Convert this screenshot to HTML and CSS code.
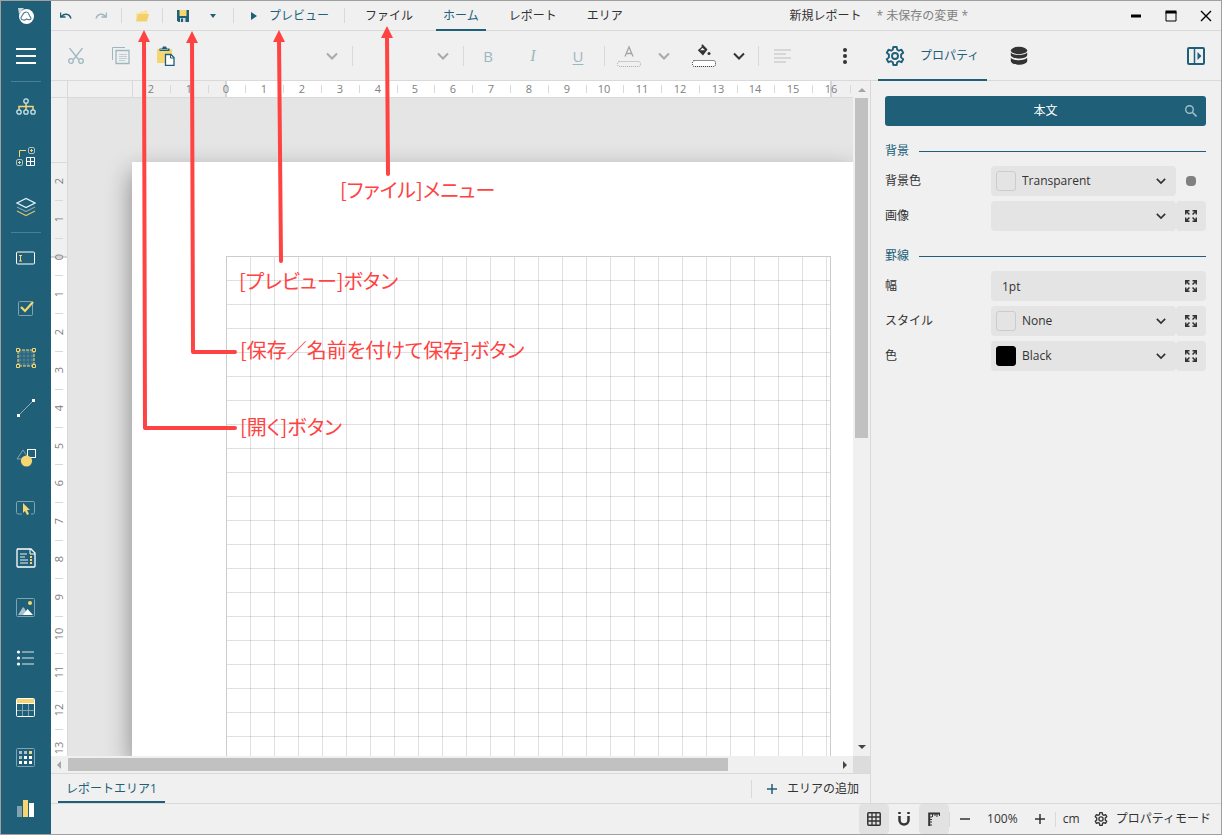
FILE: index.html
```html
<!DOCTYPE html>
<html lang="ja">
<head>
<meta charset="utf-8">
<meta name="viewport" content="width=device-width, initial-scale=1">
<title>新規レポート</title>
<link rel="stylesheet" href="styles.css">
</head>
<body>
<svg class="symbols" aria-hidden="true">
  <symbol id="chevron" viewBox="0 0 12 12"><path d="M1 3.5l5 5 5-5" fill="none" stroke="currentColor" stroke-width="2"/></symbol>
  <symbol id="expand" viewBox="0 0 12 12"><path d="M0 0h4.5v1.5H2.6L5 3.9 3.9 5 1.5 2.6v1.9H0zM12 0v4.5h-1.5V2.6L8.1 5 7 3.9l2.4-2.4H7.5V0zM0 12V7.5h1.5v1.9L3.9 7 5 8.1l-2.4 2.4h1.9V12zM12 12H7.500v-1.500h1.900L7 8.100 8.100 7l2.400 2.400V7.500H12z" fill="currentColor"/></symbol>
  <symbol id="gear" viewBox="0 0 20 20"><path d="M8.300 1h3.400l.5 2.700 1.700 1 2.600-1 1.700 3-2.100 1.800v2.900l2.100 1.800-1.700 3-2.600-1-1.700 1-.5 2.800H8.300l-.5-2.800-1.700-1-2.600 1-1.700-3 2.100-1.800V8.500L1.800 6.700l1.700-3 2.600 1 1.700-1z" fill="none" stroke="currentColor" stroke-width="1.900" stroke-linejoin="round"/><circle cx="10" cy="10" r="3" fill="none" stroke="currentColor" stroke-width="1.900"/></symbol>
</svg>
<div class="app">
  <nav class="sidebar" aria-label="レポートコントロール">
    <div class="logo">
      <svg width="18" height="18" viewBox="0 0 18 18"><path d="M1 1h6L2 7z" fill="#c9dade"/><circle cx="9.500" cy="9.500" r="7.500" fill="#fff"/><path d="M4 11c0-1.500 1-1.800 1.500-3C6.500 5.500 8 5 9.500 5c2 0 2.300 2 3.200 4 .8 1.500 1.300 1.500 1.300 2.500 0 1.500-3 1.500-4.500.5-1.500 1.500-5.500 1.500-5.500-1z" fill="none" stroke="#547f92" stroke-width="1.200"/></svg>
    </div>
    <button class="tool" aria-label="メニュー"><svg width="20" height="18" viewBox="0 0 20 18"><path d="M0 2h20M0 9h20M0 16h20" stroke="#fff" stroke-width="2"/></svg></button>
    <hr class="tool-line">
    <button class="tool" aria-label="エクスプローラ"><svg width="20" height="18" viewBox="0 0 20 18" fill="none"><path d="M10 5v7M3 12V8.500h14V12" stroke="#f5d671" stroke-width="1.500"/><g stroke="#c5e4ee" stroke-width="1.300" fill="#205f78"><circle cx="10" cy="3" r="2.200"/><circle cx="3" cy="14" r="2.200"/><circle cx="10" cy="14" r="2.200"/><circle cx="17" cy="14" r="2.200"/></g></svg></button>
    <button class="tool" aria-label="グループエディタ"><svg width="20" height="20" viewBox="0 0 20 20" fill="none"><path d="M3.500 10V3.500H10" stroke="#f5d671"/><g stroke="#a7c0ca"><rect x="12.500" y=".5" width="6" height="6" rx="1.500"/><rect x=".5" y="12.500" width="6" height="6" rx="1.500"/></g><path d="M14 3.500h3M15.500 2v3M2 15.500h3M3.500 14v3" stroke="#f5d671"/><path d="M10.500 10.500h8v8h-8zM14.500 10v9M10 14.500h9" stroke="#fff"/></svg></button>
    <button class="tool" aria-label="レイヤーリスト"><svg width="20" height="20" viewBox="0 0 20 20" fill="none"><path d="M1 6l9-4.500L19 6l-9 4.500z" stroke="#e5f2f6" stroke-width="1.200"/><path d="M1 10l9 4.500 9-4.500" stroke="#7fa3b1" stroke-width="1.200"/><path d="M1 14l9 4.500 9-4.500" stroke="#d8c36e" stroke-width="1.200"/></svg></button>
    <hr class="tool-line">
    <button class="tool" aria-label="テキストボックス"><svg width="20" height="14" viewBox="0 0 20 14" fill="none"><rect x=".5" y="1" width="18" height="12" rx="1" stroke="#fff"/><path d="M3 4.500h3M4.500 4v6M3 10h3" stroke="#f5d671"/></svg></button>
    <button class="tool" aria-label="チェックボックス"><svg width="18" height="16" viewBox="0 0 18 16" fill="none"><rect x="1.500" y="1.500" width="14" height="14" rx="1" stroke="#7fa3b1"/><path d="M4 7l4 4 8-9" stroke="#f5d671" stroke-width="2.200"/></svg></button>
    <button class="tool" aria-label="コンテナ"><svg width="20" height="20" viewBox="0 0 20 20" fill="none"><path d="M2 2h16v16H2z" fill="#4a7c90"/><path d="M6 2v16M10 2v16M14 2v16M2 6h16M2 10h16M2 14h16" stroke="#205f78"/><path d="M2 2h16v16H2z" stroke="#f5d671" stroke-dasharray="3 1"/><g fill="#205f78" stroke="#f5d671"><path d="M.5.500h3v3h-3zM16.500.500h3v3h-3zM.5 16.500h3v3h-3zM16.500 16.500h3v3h-3z"/></g></svg></button>
    <button class="tool" aria-label="直線"><svg width="20" height="20" viewBox="0 0 20 20"><path d="M2 18L18 2" stroke="#8fb0bd"/><path d="M1 16h3v3H1zM16 1h3v3h-3z" fill="#fff"/></svg></button>
    <button class="tool" aria-label="図形"><svg width="20" height="20" viewBox="0 0 20 20" fill="none"><path d="M1 11L7 2l6 9z" stroke="#7fa3b1"/><rect x="11.500" y="1.500" width="8" height="8" stroke="#fff"/><circle cx="10.500" cy="13" r="5.600" fill="#f5d671"/></svg></button>
    <button class="tool" aria-label="入力フィールド"><svg width="20" height="16" viewBox="0 0 20 16" fill="none"><path d="M6 14H2q-1.500 0-1.500-1.500v-10Q.5 1.500 2 1.500h15q1.500 0 1.500 1v10q0 1.500-1.500 1.500h-2" stroke="#7fa3b1"/><path d="M7 3l7 7h-3l2 4-2 1-2-4-2 2z" fill="#f5d671"/></svg></button>
    <button class="tool" aria-label="リッチテキスト"><svg width="20" height="20" viewBox="0 0 20 20" fill="none"><path d="M1.500 1H15l4 4v13q0 1-1 1H2q-1 0-1-1V2z" stroke="#fff" stroke-width="1.300"/><path d="M14 1v5h5" stroke="#fff"/><path d="M4 6h7M4 9h5M4 12h8M4 15h8" stroke="#a7c0ca" stroke-width="1.600"/><path d="M14 8h2v2h-2zM14 11h2v2h-2zM14 14h2v2h-2z" fill="#f5d671"/></svg></button>
    <button class="tool" aria-label="画像"><svg width="20" height="20" viewBox="0 0 20 20" fill="none"><rect x=".5" y=".5" width="18" height="18" rx="1" stroke="#7fa3b1"/><path d="M2 17l5-8 2 2 2 6z" fill="#a7c0ca"/><path d="M7 17l4.500-6 5.500 6z" fill="#fff"/><circle cx="14" cy="5" r="2" fill="#f5d671"/></svg></button>
    <button class="tool" aria-label="リスト"><svg width="20" height="18" viewBox="0 0 20 18"><path d="M6 3h12M6 9h12M6 15h12" stroke="#7fa3b1" stroke-width="2"/><g fill="#fff"><circle cx="2.500" cy="3" r="1.600"/><circle cx="2.500" cy="9" r="1.600"/><circle cx="2.500" cy="15" r="1.600"/></g></svg></button>
    <button class="tool" aria-label="テーブル"><svg width="20" height="20" viewBox="0 0 20 20" fill="none"><path d="M6.500 6v12M12.500 6v12M1 12.500h17" stroke="#7fa3b1"/><path d="M1 1h17v4H1z" fill="#f5d671"/><path d="M.5 5.500h18" stroke="#fff"/><rect x=".5" y=".5" width="18" height="18" rx="1" stroke="#fff"/></svg></button>
    <button class="tool" aria-label="Tablix"><svg width="20" height="20" viewBox="0 0 20 20" fill="none"><rect x=".5" y=".5" width="18" height="18" rx="1" stroke="#7fa3b1"/><path d="M3 3h3v3H3zM8 3h3v3H8zM3 8h3v3H3z" fill="#a7c0ca"/><path d="M13 3h3v3h-3z" fill="#f5d671"/><path d="M8 8h3v3H8zM13 8h3v3h-3zM3 13h3v3H3zM8 13h3v3H8zM13 13h3v3h-3z" fill="#fff"/></svg></button>
    <button class="tool" aria-label="チャート"><svg width="18" height="18" viewBox="0 0 18 18"><path d="M0 7h5v11H0z" fill="#7fa3b1"/><path d="M6 1h5v17H6z" fill="#f5d671"/><path d="M12 4h5v14h-5z" fill="#fff"/></svg></button>
  </nav>

  <div class="main">
    <header class="titlebar">
      <button class="icon-btn teal" aria-label="元に戻す"><svg width="12" height="8" viewBox="0 0 12 8" fill="none"><path d="M.5.500v4.500h5M1.500 4.500C4 1.500 9 1 11 6.500" stroke="currentColor" stroke-width="1.500"/></svg></button>
      <button class="icon-btn faded next" aria-label="やり直し"><svg width="12" height="8" viewBox="0 0 12 8" fill="none"><path d="M11.500.500v4.500h-5M10.500 4.500C8 1.500 3 1 1 6.500" stroke="currentColor" stroke-width="1.500"/></svg></button>
      <span class="sep"></span>
      <button class="icon-btn" aria-label="開く"><svg width="14" height="12" viewBox="0 0 14 12"><path d="M1 10V3h3.500l1-1.500h3L9 .5h3.500V4H3z" fill="#fae39b"/><path d="M3 4h11l-2 7.500H1z" fill="#f4d06a"/></svg></button>
      <span class="sep"></span>
      <button class="icon-btn" aria-label="保存"><svg width="12" height="12" viewBox="0 0 12 12"><path d="M0 0h12v12H1.500L0 10.500z" fill="#205f78"/><path d="M2.500 0h7v6h-7z" fill="#f5d671"/><path d="M3 8h5.500v4H3z" fill="#cfdde2"/><path d="M4 8.500h2V12H4z" fill="#205f78"/></svg></button>
      <button class="icon-btn teal" aria-label="名前を付けて保存"><svg width="6" height="4" viewBox="0 0 6 4"><path d="M0 0h6L3 4z" fill="currentColor"/></svg></button>
      <span class="sep"></span>
      <button class="preview"><svg width="8" height="8" viewBox="0 0 8 8"><path d="M1 0l6 4-6 4z" fill="currentColor"/></svg>プレビュー</button>
      <span class="sep"></span>
      <nav class="menu">
        <button class="menu-tab">ファイル</button>
        <button class="menu-tab active">ホーム</button>
        <button class="menu-tab">レポート</button>
        <button class="menu-tab">エリア</button>
      </nav>
      <div class="doc-title"><span>新規レポート</span><span class="unsaved">* 未保存の変更 *</span></div>
      <div class="window-buttons">
        <button class="icon-btn black" aria-label="最小化"><svg width="12" height="12" viewBox="0 0 12 12"><path d="M1 6h10" stroke="currentColor" stroke-width="3"/></svg></button>
        <button class="icon-btn black" aria-label="最大化"><svg width="12" height="12" viewBox="0 0 12 12"><path d="M1 2h10v9H1z" fill="none" stroke="currentColor"/><path d="M.5 2h11" stroke="currentColor" stroke-width="3"/></svg></button>
        <button class="icon-btn black" aria-label="閉じる"><svg width="12" height="12" viewBox="0 0 12 12"><path d="M1 1l10 10M11 1L1 11" stroke="currentColor" stroke-width="1.400"/></svg></button>
      </div>
    </header>

    <div class="content">
      <main class="editor">
        <div class="toolbar">
          <button class="clip-btn faded" aria-label="切り取り"><svg width="16" height="16" viewBox="0 0 16 16" fill="none" stroke="currentColor" stroke-width="1.300"><path d="M1.500 0l9 11.500M14.500 0l-9 11.500"/><circle cx="3" cy="13" r="2.300"/><circle cx="13" cy="13" r="2.300"/></svg></button>
          <button class="clip-btn faded" aria-label="コピー"><svg width="18" height="18" viewBox="0 0 18 18" fill="none" stroke="currentColor"><path d="M.5 13V.5H13"/><path d="M4 3.500h13v13H4z" stroke-width="1.300"/><path d="M7 7.500h8M7 9.500h8M7 11.500h8M7 13.500h6" stroke="#bccdd5"/></svg></button>
          <button class="clip-btn" aria-label="貼り付け"><svg width="18" height="20" viewBox="0 0 18 20"><path d="M0 3h15v14H0z" fill="#f5d671"/><path d="M2.500 5V2.500H5L6 .5h3L10 2.500h2.500V5z" fill="#205f78"/><path d="M3.500 3.500h8" stroke="#f0f0f0" stroke-dasharray="1 1"/><path d="M8.500 8.500h5.500l3 3v8H8.500z" fill="#fff" stroke="#205f78" stroke-width="1.300"/><path d="M13.500 8.500v3.500H17" fill="none" stroke="#205f78"/></svg></button>
          <label class="combo font-combo"><select aria-label="フォント"><option></option></select><svg class="combo-arrow" width="12" height="12"><use href="#chevron"/></svg></label>
          <span class="sep tall"></span>
          <label class="combo size-combo"><select aria-label="フォントサイズ"><option></option></select><svg class="combo-arrow" width="12" height="12"><use href="#chevron"/></svg></label>
          <span class="sep tall"></span>
          <div class="styles">
            <button class="style-btn">B</button>
            <button class="style-btn italic">I</button>
            <button class="style-btn underline">U</button>
          </div>
          <span class="sep tall"></span>
          <button class="style-btn" aria-label="文字色"><svg width="24" height="24" viewBox="0 0 24 24" fill="none" stroke="#a5a5a5"><path d="M8 12.500L12 3l4 9.500M9.500 9.500h5" stroke-width="1.300"/><rect x=".5" y="17.500" width="23" height="5" rx="2" stroke-dasharray="1 1"/></svg></button>
          <button class="icon-btn grey" aria-label="文字色の選択"><svg width="12" height="12"><use href="#chevron"/></svg></button>
          <button class="style-btn next" aria-label="背景色"><svg width="24" height="24" viewBox="0 0 24 24"><path d="M9.500 1l1-.8 5 5.300L11 11.500 5.800 6.300l4-3.500z" fill="#333"/><path d="M8 6.200l2.500-2.500 2.500 2.500z" fill="#f0f0f0"/><circle cx="17" cy="9.500" r="1.500" fill="#333"/><rect x=".5" y="16.500" width="23" height="6" rx="2" fill="#fff" stroke="#222" stroke-dasharray="1 1"/></svg></button>
          <button class="icon-btn dark" aria-label="背景色の選択"><svg width="12" height="12"><use href="#chevron"/></svg></button>
          <span class="sep tall"></span>
          <button class="style-btn" aria-label="配置"><svg width="18" height="14" viewBox="0 0 18 14"><path d="M0 1h17M0 5h12M0 9h17M0 13h12" stroke="#bdbdbd"/></svg></button>
          <button class="icon-btn dark more" aria-label="その他"><svg width="6" height="18" viewBox="0 0 6 18" fill="currentColor"><circle cx="3" cy="3" r="2"/><circle cx="3" cy="9" r="2"/><circle cx="3" cy="15" r="2"/></svg></button>
        </div>

        <div class="design">
          <div class="corner"></div>
          <div class="ruler-x">
            <svg width="785" height="16" aria-hidden="true">
              <path d="M158 0h605v16H158z" fill="#fff"/>
              <path d="M64.500 0v16" stroke="#d9d9d9"/>
              <path d="M158 0v16M763 0v16" stroke="#d5d5d5" stroke-width="2"/>
              <path class="ticks" d="M102.500 4v8M140.500 4v8M177.500 4v8M215.500 4v8M253.500 4v8M291.500 4v8M329.500 4v8M366.500 4v8M404.500 4v8M442.500 4v8M480.500 4v8M518.500 4v8M555.500 4v8M593.500 4v8M631.500 4v8M669.500 4v8M706.500 4v8M744.500 4v8M782.500 4v8"/>
              <g class="marks"><text x="83" y="12">2</text><text x="121" y="12">1</text><text x="158" y="12">0</text><text x="196" y="12">1</text><text x="234" y="12">2</text><text x="272" y="12">3</text><text x="310" y="12">4</text><text x="347" y="12">5</text><text x="385" y="12">6</text><text x="423" y="12">7</text><text x="461" y="12">8</text><text x="499" y="12">9</text><text x="536" y="12">10</text><text x="574" y="12">11</text><text x="612" y="12">12</text><text x="650" y="12">13</text><text x="687" y="12">14</text><text x="725" y="12">15</text><text x="763" y="12">16</text></g>
            </svg>
          </div>
          <div class="ruler-y">
            <svg width="16" height="658" aria-hidden="true">
              <path d="M0 159h16v2000H0z" fill="#fff"/>
              <path d="M0 64.500h16" stroke="#d9d9d9"/>
              <path d="M0 159h16" stroke="#d5d5d5" stroke-width="2"/>
              <path class="ticks" d="M4 102.500h8M4 140.500h8M4 177.500h8M4 215.500h8M4 253.500h8M4 291.500h8M4 329.500h8M4 366.500h8M4 404.500h8M4 442.500h8M4 480.500h8M4 518.500h8M4 555.500h8M4 593.500h8M4 631.500h8"/>
              <g class="marks" transform="rotate(-90)"><text x="-83" y="12">2</text><text x="-121" y="12">1</text><text x="-159" y="12">0</text><text x="-196" y="12">1</text><text x="-234" y="12">2</text><text x="-272" y="12">3</text><text x="-310" y="12">4</text><text x="-348" y="12">5</text><text x="-385" y="12">6</text><text x="-423" y="12">7</text><text x="-461" y="12">8</text><text x="-499" y="12">9</text><text x="-536" y="12">10</text><text x="-574" y="12">11</text><text x="-612" y="12">12</text><text x="-650" y="12">13</text></g>
            </svg>
          </div>
          <div class="viewport"><div class="page"><div class="page-grid"></div></div></div>
          <div class="scroll-y">
            <svg class="muted" width="8" height="4" viewBox="0 0 8 4"><path d="M0 4l4-4 4 4z" fill="currentColor"/></svg>
            <div class="track-y"><div class="thumb-y"></div></div>
            <svg width="8" height="4" viewBox="0 0 8 4"><path d="M0 0h8L4 4z" fill="currentColor"/></svg>
          </div>
          <div class="scroll-x">
            <svg class="muted" width="4" height="8" viewBox="0 0 4 8"><path d="M4 0v8L0 4z" fill="currentColor"/></svg>
            <div class="track-x"><div class="thumb-x"></div></div>
            <svg width="4" height="8" viewBox="0 0 4 8"><path d="M0 0v8l4-4z" fill="currentColor"/></svg>
          </div>
          <div class="scroll-corner"></div>
        </div>

        <div class="area-bar">
          <button class="area-tab">レポートエリア1</button>
          <span class="sep area-sep"></span>
          <button class="add-area"><svg width="10" height="10" viewBox="0 0 10 10"><path d="M5 0v10M0 5h10" stroke="#205f78" stroke-width="1.500"/></svg>エリアの追加</button>
        </div>
      </main>

      <aside class="panel">
        <div class="panel-tabs">
          <button class="panel-tab"><svg width="20" height="20"><use href="#gear"/></svg>プロパティ</button>
          <button class="panel-icon dark" aria-label="データ"><svg width="18" height="20" viewBox="0 0 18 20" fill="currentColor"><ellipse cx="9" cy="4.500" rx="8.200" ry="3.700"/><path d="M.8 6.500c2 3.200 14.400 3.200 16.400 0v2.700c-1 4.300-15.400 4.300-16.400 0z"/><path d="M.8 11.800c2 3.200 14.400 3.200 16.400 0v3.200c-1 5-15.400 5-16.400 0z"/></svg></button>
          <button class="panel-icon teal collapse" aria-label="パネルを閉じる"><svg width="18" height="18" viewBox="0 0 18 18"><rect x="1" y="1" width="16" height="16" rx="1" fill="none" stroke="currentColor" stroke-width="2"/><path d="M7.500 1v16" stroke="currentColor" stroke-width="1.500"/><path d="M10.500 5l4 4-4 4z" fill="currentColor"/></svg></button>
        </div>
        <div class="panel-body">
          <button class="target">本文<svg class="target-icon" width="12" height="12" viewBox="0 0 12 12"><circle cx="4.500" cy="4.500" r="3.800" fill="none" stroke="#a3bfca" stroke-width="1.400"/><path d="M7.300 7.300l4.200 4.200" stroke="#a3bfca" stroke-width="1.600"/></svg></button>

          <h2 class="section">背景</h2>
          <div class="rows">
            <div class="row">
              <label for="bgcolor">背景色</label>
              <div class="combo field"><select id="bgcolor" class="with-swatch"><option>Transparent</option></select><span class="swatch"></span><svg class="combo-arrow" width="10" height="10"><use href="#chevron"/></svg></div>
              <button class="row-btn plain" aria-label="背景色のオプション"><span class="dot"></span></button>
            </div>
            <div class="row">
              <label for="bgimage">画像</label>
              <div class="combo field"><select id="bgimage"><option></option></select><svg class="combo-arrow" width="10" height="10"><use href="#chevron"/></svg></div>
              <button class="row-btn" aria-label="画像を展開"><svg width="12" height="12"><use href="#expand"/></svg></button>
            </div>
          </div>

          <h2 class="section">罫線</h2>
          <div class="rows">
            <div class="row">
              <label for="bwidth">幅</label>
              <input id="bwidth" class="field joined" type="text" value="1pt">
              <button class="row-btn joined-btn" aria-label="幅を展開"><svg width="12" height="12"><use href="#expand"/></svg></button>
            </div>
            <div class="row">
              <label for="bstyle">スタイル</label>
              <div class="combo field"><select id="bstyle" class="with-swatch"><option>None</option></select><span class="swatch"></span><svg class="combo-arrow" width="10" height="10"><use href="#chevron"/></svg></div>
              <button class="row-btn" aria-label="スタイルを展開"><svg width="12" height="12"><use href="#expand"/></svg></button>
            </div>
            <div class="row">
              <label for="bcolor">色</label>
              <div class="combo field"><select id="bcolor" class="with-swatch"><option>Black</option></select><span class="swatch filled"></span><svg class="combo-arrow" width="10" height="10"><use href="#chevron"/></svg></div>
              <button class="row-btn" aria-label="色を展開"><svg width="12" height="12"><use href="#expand"/></svg></button>
            </div>
          </div>
        </div>
      </aside>
    </div>

    <footer class="status">
      <button class="icon-btn dark pressed" aria-label="グリッド"><svg width="14" height="14" viewBox="0 0 14 14" fill="none" stroke="currentColor"><rect x=".8" y=".8" width="12.400" height="12.400" rx="1" stroke-width="1.500"/><path d="M5 1v12M9 1v12M1 5h12M1 9h12" stroke-width="1.300"/></svg></button>
      <button class="icon-btn dark" aria-label="スナップ"><svg width="14" height="14" viewBox="0 0 14 14" fill="none" stroke="currentColor" stroke-width="2.500"><path d="M2.500 4v4c0 6 9 6 9 0V4M2.500 0v2M11.500 0v2"/></svg></button>
      <button class="icon-btn dark pressed" aria-label="ルーラー"><svg width="12" height="14" viewBox="0 0 12 14" fill="none" stroke="currentColor"><path d="M1.200 14V1.500H12" stroke-width="2"/><path d="M4.500 2v3M7 2v2M9 2v3M11.500 2v2M2 5h2M2 7.500h2M2 10h2M2 13h2"/></svg></button>
      <span class="status-line"></span>
      <button class="icon-btn dark" aria-label="縮小"><svg width="10" height="10" viewBox="0 0 10 10"><path d="M0 5h10" stroke="currentColor" stroke-width="1.500"/></svg></button>
      <button class="zoom">100%</button>
      <button class="icon-btn dark" aria-label="拡大"><svg width="10" height="10" viewBox="0 0 10 10"><path d="M5 0v10M0 5h10" stroke="currentColor" stroke-width="1.500"/></svg></button>
      <span class="status-line"></span>
      <button class="unit">cm</button>
      <button class="mode"><svg width="14" height="14"><use href="#gear"/></svg>プロパティモード</button>
    </footer>
  </div>

  <svg class="callouts" width="600" height="450" viewBox="0 0 600 450">
    <g fill="none" stroke="#ff4343" stroke-width="4" stroke-linecap="round" stroke-linejoin="round">
      <path d="M144 38L145 428H235"/>
      <path d="M192 38L193 352H235"/>
      <path d="M279 38L281 261"/>
      <path d="M387 36L388 174"/>
    </g>
    <path d="M144 30l6 12h-12zM192 31l6 12h-12zM279 30l6 12h-12zM387 26l6 12h-12z" fill="#ff4343"/>
    <g class="callout-text">
      <text x="340" y="198">[ファイル]メニュー</text>
      <text x="239" y="289">[プレビュー]ボタン</text>
      <text x="240" y="358">[保存／名前を付けて保存]ボタン</text>
      <text x="240" y="435">[開く]ボタン</text>
    </g>
  </svg>
</div>
</body>
</html>
```
FILE: styles.css
```css
*, *::before, *::after { box-sizing: border-box; }

:root {
  --teal: #205f78;
  --bg: #f0f0f0;
  --line: #d9d9d9;
  --field: #e4e4e4;
  --text: #333;
}

body {
  margin: 0;
  background: var(--bg);
  color: var(--text);
  font: 12px/18px "Open Sans", "Noto Sans CJK JP", sans-serif;
}

button, select, input {
  margin: 0;
  padding: 0;
  border: 0;
  background: none;
  color: inherit;
  font: inherit;
}

svg { display: block; flex: none; }
.symbols { position: absolute; width: 0; height: 0; }

.app {
  position: relative;
  display: flex;
  height: 100vh;
  border: 1px solid #a0a0a0;
  overflow: hidden;
}

/* Sidebar */
.sidebar {
  display: flex;
  flex: none;
  flex-direction: column;
  width: 50px;
  background: var(--teal);
  overflow: hidden;
}
.logo {
  display: grid;
  flex: none;
  place-items: center;
  height: 30px;
}
.tool {
  display: grid;
  flex: none;
  place-items: center;
  height: 50px;
}
.tool-line {
  flex: none;
  width: 30px;
  height: 1px;
  margin: 0 auto;
  border: 0;
  background: #4a7e93;
}

.main {
  display: flex;
  flex: 1;
  flex-direction: column;
  min-width: 0;
}

/* Shared controls */
.icon-btn {
  display: grid;
  flex: none;
  place-items: center;
  width: 30px;
  height: 30px;
}
.next { margin-left: 5px; }
.teal { color: var(--teal); }
.faded { color: #9db7c2; }
.grey { color: #a9a9a9; }
.dark { color: #333; }
.black { color: #000; }
.sep {
  flex: none;
  width: 1px;
  height: 15px;
  margin: 0 5px;
  background: var(--line);
}
.sep.tall { height: 20px; margin: 0 4px; }

.combo { display: grid; align-items: center; }
.combo > * { grid-area: 1 / 1; }
.combo select {
  width: 100%;
  height: 100%;
  padding-left: 11px;
  appearance: none;
}
.combo .with-swatch { padding-left: 31px; }
.combo-arrow {
  justify-self: end;
  margin-right: 10px;
  pointer-events: none;
}

/* Title bar */
.titlebar {
  display: flex;
  flex: none;
  align-items: center;
  height: 30px;
  border-bottom: 1px solid var(--line);
}
.preview {
  display: flex;
  align-items: center;
  gap: 11px;
  height: 30px;
  padding: 0 10px 0 11px;
  color: var(--teal);
  white-space: nowrap;
}
.menu { display: flex; gap: 16px; padding-left: 8px; }
.menu-tab {
  height: 30px;
  padding: 2px 7px 0;
  border-bottom: 2px solid transparent;
  white-space: nowrap;
}
.menu-tab.active { border-color: var(--teal); color: var(--teal); }
.doc-title {
  display: flex;
  gap: 15px;
  margin-left: auto;
  padding-right: 153px;
  white-space: nowrap;
}
.unsaved { color: #808080; }
.window-buttons { display: flex; gap: 5px; }

.content { display: flex; flex: 1; min-height: 0; }
.editor {
  display: flex;
  flex: 1;
  flex-direction: column;
  min-width: 0;
}

/* Toolbar */
.toolbar {
  display: flex;
  flex: none;
  align-items: center;
  height: 50px;
  padding-left: 2px;
  border-bottom: 1px solid var(--line);
}
.clip-btn {
  display: grid;
  flex: none;
  place-items: center;
  width: 45px;
  height: 40px;
}
.font-combo, .size-combo { flex: none; height: 30px; color: #a9a9a9; }
.font-combo { width: 160px; }
.size-combo { width: 102px; }
.styles { display: flex; gap: 5px; padding-right: 2px; }
.style-btn {
  display: grid;
  flex: none;
  place-items: center;
  width: 40px;
  height: 40px;
  color: #9db7c2;
  font-size: 15px;
}
.italic { font-family: "Liberation Serif", serif; font-size: 16px; font-style: italic; }
.underline { text-decoration: underline; text-underline-offset: 2px; }
.more { margin: 0 10px 0 auto; }

/* Design surface */
.design {
  display: grid;
  flex: 1;
  grid-template: 17px minmax(0, 1fr) 17px / 17px minmax(0, 1fr) 17px;
  min-height: 0;
}
.corner { border-right: 1px solid var(--line); border-bottom: 1px solid var(--line); }
.ruler-x { border-bottom: 1px solid var(--line); overflow: hidden; }
.ruler-y {
  grid-area: 2 / 1;
  border-right: 1px solid var(--line);
  background: #fff;
  overflow: hidden;
}
.ruler-y svg { background: var(--bg); }
.ticks { fill: none; stroke: #d9d9d9; }
.marks { fill: #808080; font-size: 11px; text-anchor: middle; }
.viewport {
  display: flex;
  grid-area: 2 / 2;
  padding: 64px 0 0 64px;
  background: #e5e5e5;
  overflow: hidden;
}
.page {
  display: flex;
  flex: 1;
  padding: 94px 0 0 94px;
  background: #fff;
  box-shadow: 0 10px 24px rgba(0, 0, 0, .42);
}
.page-grid {
  flex: none;
  width: 605px;
  border: solid #ccc;
  border-width: 1px 1px 0;
  background:
    repeating-linear-gradient(90deg, transparent 0 23px, rgba(0, 0, 0, .12) 23px 24px),
    repeating-linear-gradient(transparent 0 23px, rgba(0, 0, 0, .12) 23px 24px);
}

.scroll-y, .scroll-x {
  display: flex;
  align-items: center;
  justify-content: space-between;
  color: #444;
}
.scroll-y {
  grid-area: 1 / 3 / span 2;
  flex-direction: column;
  padding: 7px 0;
}
.scroll-x { grid-area: 3 / 1 / auto / span 2; padding: 0 6px; }
.muted { color: #a5a5a5; }
.track-y { flex: 1; width: 13px; padding: 6px 0; }
.thumb-y { height: 53%; background: #c1c1c1; }
.track-x { flex: 1; height: 13px; padding: 0 7px; }
.thumb-x { width: 86%; height: 100%; background: #c1c1c1; }
.scroll-corner { grid-area: 3 / 3; background: #dcdcdc; }

/* Report area tabs */
.area-bar {
  display: flex;
  flex: none;
  align-items: center;
  height: 30px;
  padding: 0 11px 0 7px;
  border-top: 1px solid var(--line);
}
.area-tab {
  height: 29px;
  padding: 2px 8px 0;
  border-bottom: 2px solid var(--teal);
  color: var(--teal);
  white-space: nowrap;
}
.area-sep { height: 18px; margin: 0 15px 0 auto; }
.add-area {
  display: flex;
  align-items: center;
  gap: 10px;
  height: 29px;
  white-space: nowrap;
}

/* Property panel */
.panel {
  display: flex;
  flex: none;
  flex-direction: column;
  width: 351px;
}
.panel-tabs {
  display: flex;
  flex: none;
  height: 50px;
  padding: 0 15px 0 8px;
  border-bottom: 1px solid var(--line);
}
.panel-tab {
  display: flex;
  align-items: center;
  gap: 15px;
  height: 50px;
  padding: 2px 8px 0 7px;
  border-bottom: 2px solid var(--teal);
  color: var(--teal);
  white-space: nowrap;
}
.panel-icon {
  display: grid;
  place-items: center;
  width: 34px;
  height: 50px;
  margin-left: 15px;
}
.panel-icon.collapse { width: 20px; margin-left: auto; }
.panel-body {
  flex: 1;
  padding: 15px 15px 15px 14px;
  border-left: 1px solid var(--line);
}
.target {
  display: grid;
  align-items: center;
  justify-items: center;
  grid-template-columns: 25px 1fr 25px;
  width: 100%;
  height: 30px;
  border-radius: 3px;
  background: var(--teal);
  color: #fff;
}
.target::before { content: ""; }
.target-icon { justify-self: start; margin-left: 4px; }
.section {
  display: flex;
  align-items: center;
  gap: 10px;
  height: 30px;
  margin: 10px 0 0;
  color: var(--teal);
  font-size: 12px;
  font-weight: 400;
}
.section::after {
  content: "";
  flex: 1;
  height: 1px;
  background: var(--teal);
}
.rows { display: grid; gap: 5px; }
.row {
  display: grid;
  grid-template-columns: 106px 1fr 30px;
  align-items: center;
}
.field {
  height: 30px;
  min-width: 0;
  border-radius: 4px;
  background: var(--field);
}
.field.joined { padding: 0 11px; border-radius: 4px 0 0 4px; }
.swatch {
  width: 20px;
  height: 20px;
  margin-left: 5px;
  border: 1px solid #ccc;
  border-radius: 3px;
  pointer-events: none;
}
.swatch.filled { border-color: #000; background: #000; }
.row-btn {
  display: grid;
  place-items: center;
  height: 30px;
  border-radius: 4px;
  background: var(--field);
}
.row-btn.plain { background: none; }
.row-btn.joined-btn { border-radius: 0 4px 4px 0; }
.dot { width: 10px; height: 10px; border-radius: 4px; background: #808080; }

/* Status bar */
.status {
  display: flex;
  flex: none;
  align-items: center;
  justify-content: flex-end;
  height: 31px;
  padding-right: 10px;
  border-top: 1px solid var(--line);
}
.pressed { border-radius: 4px; background: #e2e2e2; }
.status-line { width: 1px; height: 15px; background: var(--line); }
.zoom { width: 45px; height: 30px; }
.unit { height: 30px; padding: 0 7px; }
.mode {
  display: flex;
  align-items: center;
  gap: 8px;
  height: 30px;
  padding-left: 7px;
  white-space: nowrap;
}

/* Callouts drawn over the window */
.callouts {
  position: absolute;
  top: -1px;
  left: -1px;
  pointer-events: none;
}
.callout-text {
  fill: #ff4343;
  font-family: "Noto Sans CJK JP", sans-serif;
  font-size: 20px;
  font-feature-settings: "palt";
}
```
